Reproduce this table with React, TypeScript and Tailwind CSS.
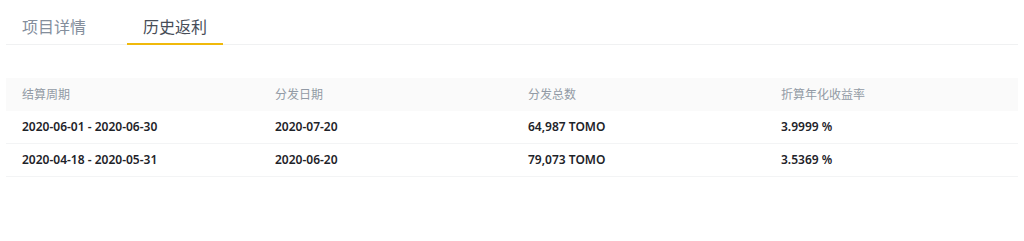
import React from 'react';

const rows = [
  { period: '2020-06-01 - 2020-06-30', date: '2020-07-20', total: '64,987 TOMO', rate: '3.9999 %' },
  { period: '2020-04-18 - 2020-05-31', date: '2020-06-20', total: '79,073 TOMO', rate: '3.5369 %' },
];

export default function App() {
  return (
    <div
      className="w-[1024px] h-[241px] bg-white px-[6px]"
      style={{ fontFamily: '"Noto Sans", "Noto Sans CJK SC", sans-serif' }}
    >
      <div className="flex h-[45px] border-b border-[#f0f1f2]">
        <div className="flex h-[45px] items-center px-4 pt-[10px] text-[16px] text-[#848e9c] border-b-2 border-transparent">
          项目详情
        </div>
        <div className="ml-[25px] flex h-[45px] items-center px-4 pt-[10px] text-[16px] text-[#474d57] border-b-2 border-[#f0b90b]">
          历史返利
        </div>
      </div>

      <div className="mt-[33px]">
        <div className="grid grid-cols-4 h-[33px] items-center bg-[#fafafa] text-[12px] text-[#929aa5]">
          <div className="px-4">结算周期</div>
          <div className="px-4">分发日期</div>
          <div className="px-4">分发总数</div>
          <div className="px-4">折算年化收益率</div>
        </div>
        {rows.map((row) => (
          <div
            key={row.period}
            className="grid grid-cols-4 h-[33px] items-center border-b border-[#f3f4f5] text-[12px] font-semibold text-[#1e2329]"
          >
            <div className="px-4">{row.period}</div>
            <div className="px-4">{row.date}</div>
            <div className="px-4">{row.total}</div>
            <div className="px-4">{row.rate}</div>
          </div>
        ))}
      </div>
    </div>
  );
}
